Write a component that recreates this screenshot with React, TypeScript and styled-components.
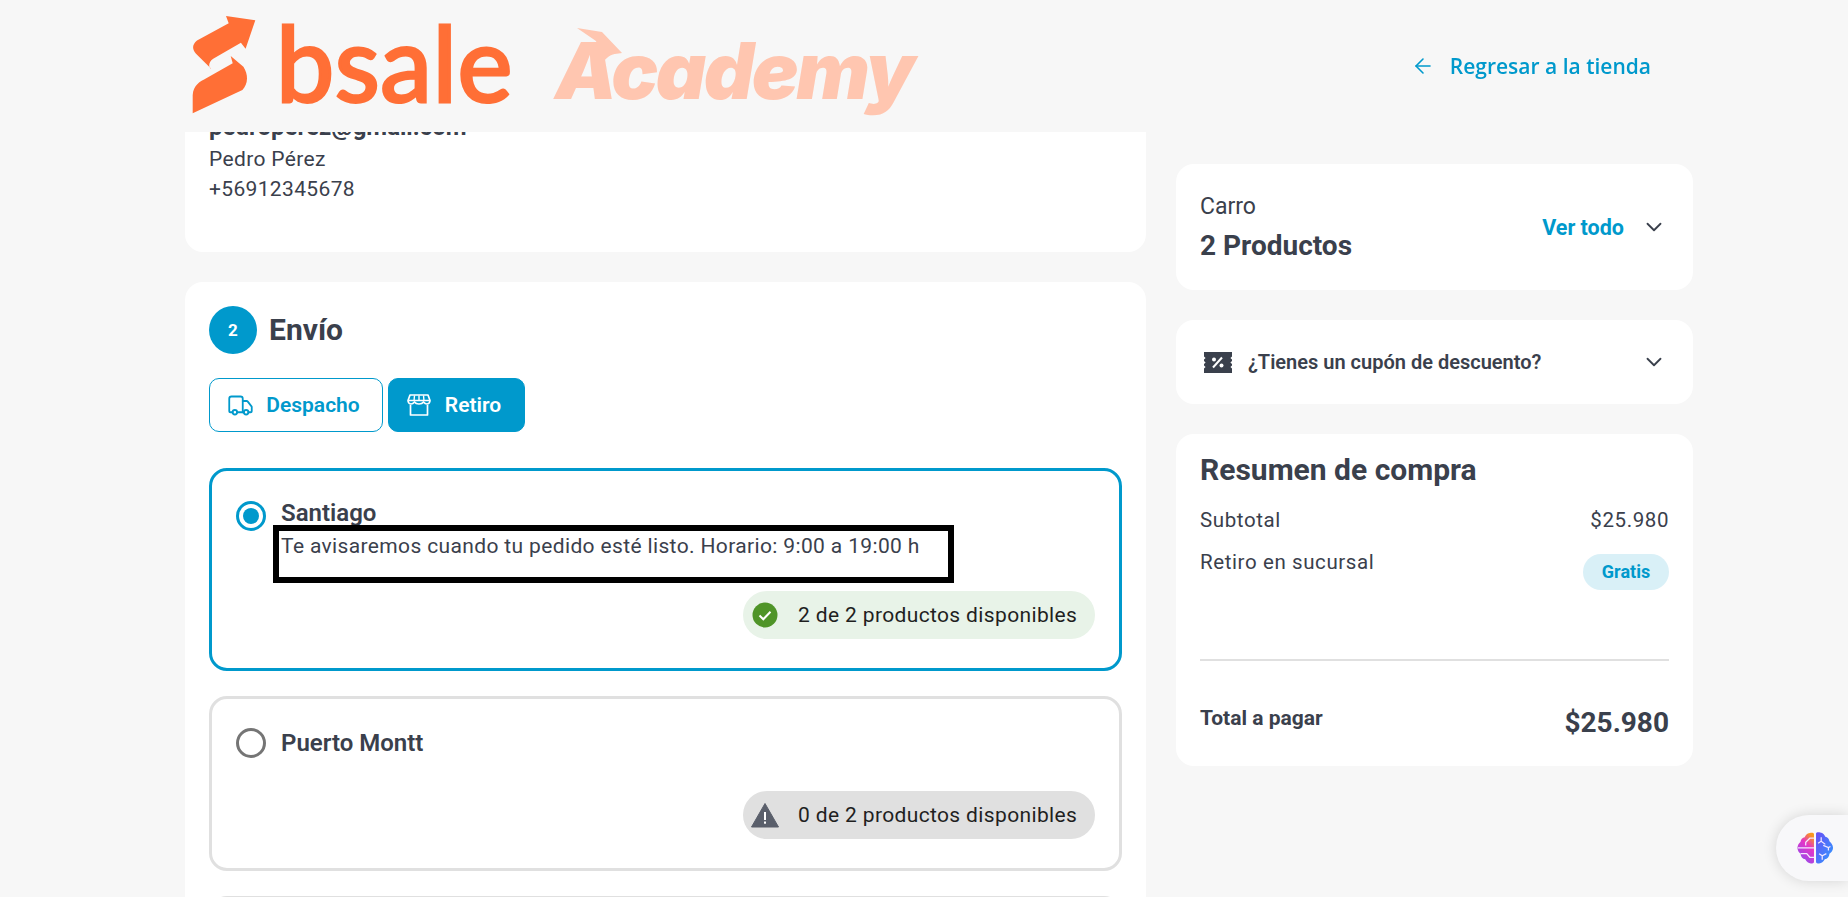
import { createGlobalStyle, styled } from 'styled-components';
import { ArrowLeft, ChevronDown, Truck } from 'lucide-react';

const GlobalStyle = createGlobalStyle`
  html, body {
    margin: 0;
    height: 897px;
    overflow: hidden;
    background: #f7f7f7;
    font-family: Roboto, "Liberation Sans", sans-serif;
    color: #3a404c;
  }
  * { box-sizing: border-box; }
`;

const Header = styled.header`
  position: fixed;
  top: 0;
  left: 0;
  right: 0;
  height: 132px;
  z-index: 5;
  background: #f7f7f7;
  display: flex;
  align-items: flex-start;
  padding: 16px 197px 0 191px;
`;

const LogoMark = styled.svg`
  width: 66px;
  height: 100px;
  flex: none;
`;

const BsaleText = styled.span`
  margin: 0 0 0 19px;
  font-family: Lato, sans-serif;
  font-weight: 400;
  font-size: 104px;
  line-height: 92px;
  letter-spacing: 0.5px;
  color: #ff6f36;
  -webkit-text-stroke: 3px #ff6f36;
`;

const AcademyWrap = styled.div`
  position: relative;
  margin-left: 42px;
`;

const AcademyText = styled.span`
  display: block;
  font-family: Inter, sans-serif;
  font-weight: 900;
  font-style: italic;
  font-size: 78px;
  line-height: 110px;
  letter-spacing: -2.4px;
  color: #ffc6b0;
`;

const GradCap = styled.svg`
  position: absolute;
  left: 20px;
  top: 12px;
  width: 48px;
  height: 40px;
`;

const BackLink = styled.a`
  margin-left: auto;
  margin-top: 36px;
  display: flex;
  align-items: center;
  gap: 15px;
  font-family: "Open Sans", sans-serif;
  font-weight: 600;
  font-size: 21px;
  line-height: 28px;
  color: #0099cc;
`;

const Layout = styled.main`
  display: grid;
  grid-template-columns: 961px 517px;
  column-gap: 30px;
  padding-left: 185px;
  align-items: start;
`;

const LeftColumn = styled.div`
  display: flex;
  flex-direction: column;
  gap: 30px;
  padding-top: 90px;
`;

const RightColumn = styled.aside`
  display: flex;
  flex-direction: column;
  gap: 30px;
  padding-top: 164px;
`;

const Card = styled.section`
  background: #fff;
  border-radius: 18px;
`;

const ContactCard = styled(Card)`
  padding: 20px 24px 48px;
  font-size: 21px;
  letter-spacing: 0.35px;
  line-height: 30px;
`;

const Email = styled.div`
  font-weight: 700;
  font-size: 24px;
  letter-spacing: 0;
  line-height: 34px;
`;

const ShippingCard = styled(Card)`
  padding: 24px;
`;

const StepRow = styled.div`
  display: flex;
  align-items: center;
  gap: 12px;
`;

const StepBadge = styled.span`
  width: 48px;
  height: 48px;
  border-radius: 50%;
  background: #0099cc;
  color: #fff;
  font-weight: 700;
  font-size: 17px;
  display: flex;
  align-items: center;
  justify-content: center;
`;

const StepTitle = styled.h2`
  margin: -2px 0 0;
  font-size: 30px;
  font-weight: 700;
`;

const Tabs = styled.div`
  display: flex;
  gap: 5px;
  margin: 24px 0 36px;
`;

const Tab = styled.button<{ $active?: boolean; $width: number }>`
  width: ${(p) => p.$width}px;
  height: 54px;
  border-radius: 10px;
  border: 1px solid #0099cc;
  background: ${(p) => (p.$active ? '#0099cc' : '#fff')};
  color: ${(p) => (p.$active ? '#fff' : '#0099cc')};
  font-family: inherit;
  font-size: 21px;
  font-weight: 600;
  display: flex;
  align-items: center;
  justify-content: center;
  gap: ${(p) => (p.$active ? 14 : 12)}px;
  padding: 0 5px 0 0;
`;

const Options = styled.div`
  display: flex;
  flex-direction: column;
  gap: 25px;
`;

const Option = styled.div<{ $selected?: boolean }>`
  height: ${(p) => (p.$selected ? 203 : 175)}px;
  border: 3px solid ${(p) => (p.$selected ? '#0099cc' : '#e0e0e0')};
  border-radius: 18px;
  padding: 29px 24px 29px 24px;
  display: flex;
  flex-direction: column;
`;

const OptionHead = styled.div`
  display: grid;
  grid-template-columns: 30px 1fr;
  column-gap: 15px;
`;

const Radio = styled.span<{ $checked?: boolean }>`
  width: 30px;
  height: 30px;
  border-radius: 50%;
  border: 3px solid ${(p) => (p.$checked ? '#0099cc' : '#757575')};
  display: flex;
  align-items: center;
  justify-content: center;
  margin-top: ${(p) => (p.$checked ? 1 : 0)}px;
  &::after {
    content: '';
    display: ${(p) => (p.$checked ? 'block' : 'none')};
    width: 16px;
    height: 16px;
    border-radius: 50%;
    background: #0099cc;
  }
`;

const OptionTitle = styled.div<{ $compact?: boolean }>`
  font-size: 24px;
  font-weight: 600;
  line-height: ${(p) => (p.$compact ? 26 : 30)}px;
`;

const Note = styled.div`
  position: relative;
  margin-top: 5px;
  font-size: 21px;
  line-height: 30px;
  letter-spacing: 0.36px;
`;

const NoteFrame = styled.span`
  position: absolute;
  left: -8px;
  top: -6px;
  width: 681px;
  height: 58px;
  border: 6px solid #000;
`;

const Stock = styled.div<{ $ok?: boolean }>`
  margin-top: auto;
  align-self: flex-end;
  width: 352px;
  height: 48px;
  border-radius: 24px;
  background: ${(p) => (p.$ok ? '#e8f3e8' : '#e0e0e0')};
  color: #1f1f1f;
  font-size: 21px;
  letter-spacing: 0.36px;
  display: flex;
  align-items: center;
  padding-left: ${(p) => (p.$ok ? 9 : 7)}px;
  gap: ${(p) => (p.$ok ? 20 : 18)}px;
`;

const CartCard = styled(Card)`
  height: 126px;
  padding: 2px 26px 0 24px;
  display: flex;
  align-items: center;
  justify-content: space-between;
`;

const CartLabel = styled.div`
  font-size: 23px;
  line-height: 30px;
`;

const CartCount = styled.div`
  font-size: 28px;
  font-weight: 700;
  line-height: 36px;
  margin-top: 6px;
`;

const CartToggle = styled.div`
  display: flex;
  align-items: center;
  gap: 17px;
  color: #0099cc;
  font-size: 21.5px;
  font-weight: 700;
  margin-top: -2px;
  svg { color: #3a404c; }
`;

const CouponCard = styled(Card)`
  height: 84px;
  padding: 0 26px 0 27px;
  display: flex;
  align-items: center;
  gap: 15px;
  font-size: 20px;
  font-weight: 600;
  svg:last-child { margin-left: auto; }
`;

const SummaryCard = styled(Card)`
  height: 332px;
  padding: 18px 24px 0;
`;

const SummaryTitle = styled.h3`
  margin: 0 0 18px;
  font-size: 30px;
  line-height: 36px;
  font-weight: 700;
`;

const SummaryRow = styled.div<{ $tall?: boolean }>`
  display: flex;
  justify-content: space-between;
  align-items: flex-start;
  height: ${(p) => (p.$tall ? 111 : 42)}px;
  font-size: 20.5px;
  line-height: 28px;
  letter-spacing: 0.6px;
`;

const FreeBadge = styled.span`
  width: 86px;
  height: 36px;
  margin-top: 6px;
  border-radius: 18px;
  background: #d9f0f7;
  color: #0099cc;
  font-size: 18px;
  font-weight: 700;
  letter-spacing: 0;
  display: flex;
  align-items: center;
  justify-content: center;
`;

const Divider = styled.hr`
  margin: 0;
  border: 0;
  height: 2px;
  background: #e0e0e0;
`;

const TotalRow = styled.div`
  display: flex;
  justify-content: space-between;
  margin-top: 40px;
`;

const TotalLabel = styled.span`
  font-size: 21px;
  font-weight: 700;
  line-height: 34px;
`;

const TotalValue = styled.span`
  font-size: 28px;
  font-weight: 700;
  line-height: 44px;
`;

const BrainWidget = styled.div`
  position: fixed;
  right: 0;
  top: 815px;
  width: 72px;
  height: 66px;
  border-radius: 33px 0 0 33px;
  background: #f8f8fa;
  box-shadow: 0 0 14px rgba(0, 0, 0, 0.14);
  display: flex;
  align-items: center;
  padding-left: 20px;
`;

function StoreIcon() {
  return (
    <svg width="24" height="22" viewBox="0 0 24 22" fill="none" stroke="#fff" strokeWidth="1.7">
      <path d="M3.500 11v10h17V11" strokeLinejoin="round" />
      <path
        d="M3 1h18l2 5.500c0 1.800-1.300 3.500-3 3.500-1.500 0-2.500-.8-3.500-2-.8 1.200-2.500 2-4.500 2s-3.700-.8-4.500-2c-1 1.200-2 2-3.500 2-1.700 0-3-1.700-3-3.500z"
        strokeLinejoin="round"
      />
      <path d="M7.500 1.500L7 7M12 1.500V7M16.500 1.500L17 7M1.500 6.500h21" strokeWidth="1.400" />
    </svg>
  );
}

function CheckBadge() {
  return (
    <svg width="26" height="26" viewBox="0 0 26 26">
      <circle cx="13" cy="13" r="12.500" fill="#4f9428" />
      <path d="M7.500 13.500l3.800 3.800 7.200-7.600" fill="none" stroke="#fff" strokeWidth="2" />
    </svg>
  );
}

function WarnBadge() {
  return (
    <svg width="30" height="26" viewBox="0 0 30 26">
      <path d="M15 1.500L28.500 25H1.500z" fill="#5a5f6b" stroke="#5a5f6b" strokeLinejoin="round" />
      <rect x="14" y="10" width="2" height="8" fill="#fff" />
      <rect x="14" y="19.500" width="2" height="2.200" fill="#fff" />
    </svg>
  );
}

function CouponIcon() {
  return (
    <svg width="30" height="23" viewBox="0 0 30 23">
      <path
        d="M1 1h28v4.500l-1.600 1.500 1.600 1.500v1.500l-1.600 1.500 1.600 1.500v1.500l-1.600 1.500 1.600 1.500V22H1v-4.500l1.600-1.500L1 14.500v-1.500l1.600-1.500L1 10V8.500L2.600 7 1 5.500z"
        fill="#3a404c"
      />
      <path d="M10 16.500l9-10" stroke="#fff" strokeWidth="2" />
      <circle cx="11" cy="8.500" r="2" fill="#fff" />
      <circle cx="18.500" cy="14.500" r="2" fill="#fff" />
    </svg>
  );
}

function BrainIcon() {
  return (
    <svg width="38" height="33" viewBox="0 0 36 32">
      <defs>
        <linearGradient id="brainLeft" x1="0.7" y1="0" x2="0.2" y2="1">
          <stop offset="0" stopColor="#f9971e" />
          <stop offset="0.35" stopColor="#e535c6" />
          <stop offset="1" stopColor="#8a4df0" />
        </linearGradient>
        <linearGradient id="brainRight" x1="0" y1="0" x2="1" y2="1">
          <stop offset="0" stopColor="#6a4df5" />
          <stop offset="1" stopColor="#2f9cff" />
        </linearGradient>
      </defs>
      <path
        d="M17 2c0-1-2-1.500-4-1-3 .5-4 2-5 4-2 .5-4 2-4 4.500-1.500 1.500-3 3-3 6 0 2.500 1.500 4.500 3 5.500 0 3 2 5 4.500 5.500 1.500 2.500 3 4 5.500 4 1.500 0 3-.5 3-1.500z"
        fill="url(#brainLeft)"
      />
      <path
        d="M19 1.500c0-1 2-1.500 4-1 3 .5 4 2 5 4 2 .5 4 2 4 4.500 1.500 1.500 3.500 3.500 3.500 6.500 0 2.500-2 4.500-3.500 5.500 0 3-2 5-4.500 5.500-1.500 2.500-3 4-5.500 4-1.500 0-3-.5-3-1.500z"
        fill="url(#brainRight)"
      />
      <g fill="none" stroke="#f4e8ff" strokeWidth="1.200">
        <path d="M17 6h-4l-4 4v3M1.500 15.500H17M4 21h6l3 3.500h4" />
        <path d="M24 5v4l-3 2M24 9l4 3M26 13l5 2 2-1M31 15v3M22 21l3 2 4-2M25 23v4" />
      </g>
    </svg>
  );
}

export default function App() {
  return (
    <>
      <GlobalStyle />
      <Header>
        <LogoMark viewBox="0 0 66 100">
          <path
            d="M35 0l29.300 4.300-9.700 28.400-4.700-6-27.700 16c-6 4-4 10-2 10L5 37.700c-4-5-4-9 1-13.300L37.700 7.300z"
            fill="#ff6f36"
          />
          <path
            d="M39.700 40l12.700 10.700c5 7.500 5 17-1 23.300L1.700 97.300V79c.7-10 7-13.300 14-17l26-14.700z"
            fill="#ff6f36"
          />
        </LogoMark>
        <BsaleText>bsale</BsaleText>
        <AcademyWrap>
          <AcademyText>Academy</AcademyText>
          <GradCap viewBox="0 0 48 40">
            <path d="M2 0l25 4 20 21-7 1c-6 1-10 5-12 9L21 13z" fill="#ffc6b0" />
            <path d="M40 26v12" stroke="#f7f7f7" strokeWidth="1.500" />
          </GradCap>
        </AcademyWrap>
        <BackLink>
          <ArrowLeft size={24} strokeWidth={1.6} />
          Regresar a la tienda
        </BackLink>
      </Header>
      <Layout>
        <LeftColumn>
          <ContactCard>
            <Email>pedroperez@gmail.com</Email>
            <div>Pedro Pérez</div>
            <div>+56912345678</div>
          </ContactCard>
          <ShippingCard>
            <StepRow>
              <StepBadge>2</StepBadge>
              <StepTitle>Envío</StepTitle>
            </StepRow>
            <Tabs>
              <Tab $width={174}>
                <Truck size={27} strokeWidth={1.6} />
                Despacho
              </Tab>
              <Tab $width={137} $active>
                <StoreIcon />
                Retiro
              </Tab>
            </Tabs>
            <Options>
              <Option $selected>
                <OptionHead>
                  <Radio $checked />
                  <div>
                    <OptionTitle $compact>Santiago</OptionTitle>
                    <Note>
                      Te avisaremos cuando tu pedido esté listo. Horario: 9:00 a 19:00 h
                      <NoteFrame />
                    </Note>
                  </div>
                </OptionHead>
                <Stock $ok>
                  <CheckBadge />2 de 2 productos disponibles
                </Stock>
              </Option>
              <Option>
                <OptionHead>
                  <Radio />
                  <OptionTitle>Puerto Montt</OptionTitle>
                </OptionHead>
                <Stock>
                  <WarnBadge />0 de 2 productos disponibles
                </Stock>
              </Option>
              <Option />
            </Options>
          </ShippingCard>
        </LeftColumn>
        <RightColumn>
          <CartCard>
            <div>
              <CartLabel>Carro</CartLabel>
              <CartCount>2 Productos</CartCount>
            </div>
            <CartToggle>
              Ver todo
              <ChevronDown size={26} strokeWidth={1.7} />
            </CartToggle>
          </CartCard>
          <CouponCard>
            <CouponIcon />
            ¿Tienes un cupón de descuento?
            <ChevronDown size={26} strokeWidth={1.7} />
          </CouponCard>
          <SummaryCard>
            <SummaryTitle>Resumen de compra</SummaryTitle>
            <SummaryRow>
              <span>Subtotal</span>
              <span>$25.980</span>
            </SummaryRow>
            <SummaryRow $tall>
              <span>Retiro en sucursal</span>
              <FreeBadge>Gratis</FreeBadge>
            </SummaryRow>
            <Divider />
            <TotalRow>
              <TotalLabel>Total a pagar</TotalLabel>
              <TotalValue>$25.980</TotalValue>
            </TotalRow>
          </SummaryCard>
        </RightColumn>
      </Layout>
      <BrainWidget>
        <BrainIcon />
      </BrainWidget>
    </>
  );
}
